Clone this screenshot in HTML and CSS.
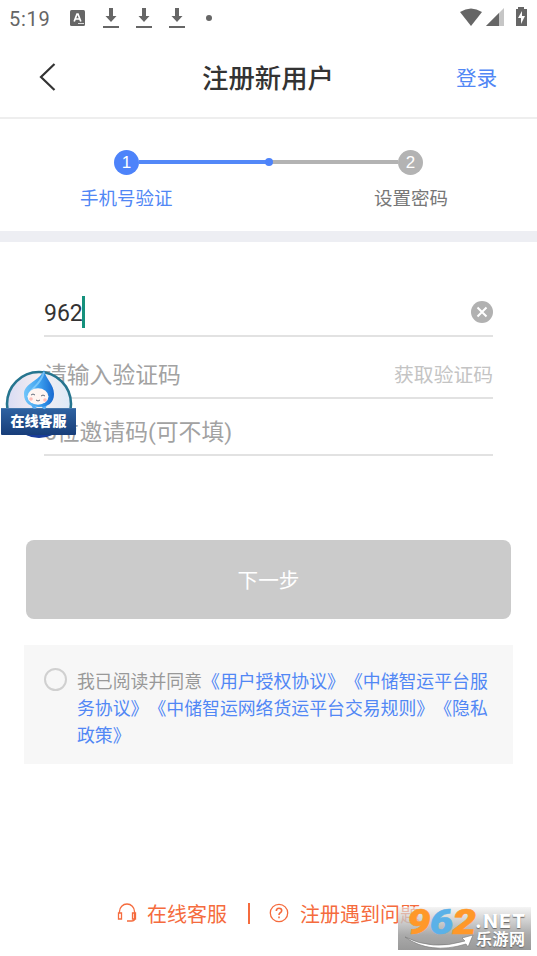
FILE: index.html
```html
<!DOCTYPE html>
<html lang="zh-CN">
<head>
<meta charset="utf-8">
<title>注册新用户</title>
<link rel="stylesheet" href="styles.css">
</head>
<body>
<div class="screen">
  <div class="status">
    <span class="clock">5:19</span>
    <svg class="app-icon" width="15" height="16" viewBox="0 0 15 16"><rect width="15" height="16" rx="1.500" fill="#666"/><path d="M4.2 11.5 7 4h1l2.8 7.5M5.3 9h4.4" fill="none" stroke="#fff" stroke-width="1.7"/><path d="M8 13.5h6" stroke="#ddd"/></svg>
    <svg class="down" width="16" height="22" viewBox="0 0 16 22"><path d="M6 1h4v8h3.5L8 15 2.5 9H6zM0 19h16v2H0z"/></svg>
    <svg class="down" width="16" height="22" viewBox="0 0 16 22"><path d="M6 1h4v8h3.5L8 15 2.5 9H6zM0 19h16v2H0z"/></svg>
    <svg class="down" width="16" height="22" viewBox="0 0 16 22"><path d="M6 1h4v8h3.5L8 15 2.5 9H6zM0 19h16v2H0z"/></svg>
    <span class="dot"></span>
    <svg class="signals" width="68" height="22" viewBox="0 0 68 22"><path d="M0 5Q11-2 22 5L11 19z" fill="#666"/><path d="M44 1v18H26z" fill="#c6c6c6"/><path d="M39 6v13H26z" fill="#666"/><path d="M58 0h6v2h3v17H56V2h2z" fill="#666"/><path d="m62 4-4 7h3v6l4-8h-3z" fill="#fff"/></svg>
  </div>
  <header class="header">
    <svg class="back" width="18" height="30" viewBox="0 0 18 30"><path d="M15.5 2 2 15l13.500 13" fill="none" stroke="#333" stroke-width="2.2"/></svg>
    <h1>注册新用户</h1>
    <a class="login">登录</a>
  </header>
  <section class="steps">
    <div class="track"><span class="num active">1</span><span class="bar done"></span><span class="node"></span><span class="bar"></span><span class="num">2</span></div>
    <div class="labels"><span class="current">手机号验证</span><span>设置密码</span></div>
  </section>
  <main>
    <div class="field phone"><span class="value">962</span><span class="caret"></span>
      <svg class="clear" width="22" height="22" viewBox="0 0 22 22"><circle cx="11" cy="11" r="11" fill="#b1b1b1"/><path d="m6.500 6.500 9 9m0-9-9 9" stroke="#fff" stroke-width="2"/></svg>
    </div>
    <div class="field code"><span>请输入验证码</span><span class="get">获取验证码</span></div>
    <div class="field invite"><span>6位邀请码(可不填)</span></div>
    <div class="next">下一步</div>
    <div class="agreement"><span class="radio"></span><p>我已阅读并同意<a>《用户授权协议》《中储智运平台服务协议》《中储智运网络货运平台交易规则》《隐私政策》</a></p></div>
  </main>
  <footer class="footer">
    <svg width="20" height="20" viewBox="0 0 20 20"><path d="M2.500 10V8.500a7.500 7.500 0 0 1 15 0V16q0 2-3 2H10M1.500 10h3v6h-3zM15.500 10h3v6h-3z" fill="none" stroke="#f56b3d" stroke-width="1.300"/></svg>
    <span class="service">在线客服</span><span class="divider"></span>
    <svg width="20" height="20" viewBox="0 0 20 20"><circle cx="10" cy="10" r="8.700" fill="none" stroke="#f56b3d" stroke-width="1.300"/><path d="M7.300 8Q7.300 5.300 10 5.300T12.700 7.800Q12.700 9 11 10 10 10.700 10 12M10 13.500v1.800" fill="none" stroke="#f56b3d" stroke-width="1.600"/></svg>
    <span class="help">注册遇到问题</span>
  </footer>
  <div class="mascot">
    <svg width="76" height="70" viewBox="0 0 76 70">
      <defs><linearGradient id="drop" x1="0" x2="1"><stop stop-color="#72c5fa"/><stop offset=".5" stop-color="#3ea2f0"/><stop offset="1" stop-color="#1769d0"/></linearGradient><linearGradient id="disc"><stop stop-color="#d9dcf4"/><stop offset=".5" stop-color="#f5eef0"/><stop offset="1" stop-color="#dceaf8"/></linearGradient><linearGradient id="banner" x2="0" y2="1"><stop stop-color="#2f63a2"/><stop offset="1" stop-color="#173d79"/></linearGradient></defs>
      <circle cx="39" cy="35" r="32" fill="url(#disc)" stroke="#26758f" stroke-width="2.600"/>
      <path d="M17 58h45q-9 11-23 11T17 58" fill="#193b9a"/>
      <rect x="1" y="39" width="75" height="27" rx="1" fill="url(#banner)"/><path d="M1 39.500h75" stroke="#4678ad"/>
      <path d="M31 34q1 8 6 5M41 36q4 9 6-1" fill="#57aef5"/>
      <path d="M44 1c2 10 10 14 10 24 0 9-6 13-15 13s-15-4-15-13C24 14 40 12 44 1z" fill="url(#drop)"/>
      <path d="M44 3c-4 15-14 15-16 25" fill="none" stroke="#9bdcff" stroke-width="2" opacity=".6"/>
      <ellipse cx="38" cy="27.500" rx="10.500" ry="8.300" fill="#fff5f2"/>
      <path d="M31 26q2-2 4 0m6 1q2-2 4 0M36 31q2 2 4 0" fill="none" stroke="#39465a" stroke-width=".8"/><circle cx="31" cy="30" r="1.800" fill="#ffbbb7"/><circle cx="45" cy="31" r="1.800" fill="#ffbbb7"/>
    </svg>
    <span>在线客服</span>
  </div>
  <div class="watermark">
    <svg width="133" height="43" viewBox="0 0 133 43"><path d="M7 30q27 14 60 4l-3-3 11-3-5 12-2-3Q32 48 7 30z" fill="#fff" stroke="#777" stroke-width=".6"/></svg>
    <span class="brand"><b>9</b><b class="six">6</b><b>2</b></span><span class="net">.NET</span><span class="site">乐游网</span>
  </div>
</div>
</body>
</html>
```
FILE: styles.css
```css
* { box-sizing: border-box; }
body { margin: 0; background: #fff; font-family: Roboto, "Noto Sans CJK SC", sans-serif; color: #333; text-spacing-trim: space-all; }
svg { display: block; flex: none; }
.screen { position: relative; width: 537px; height: 956px; display: flex; flex-direction: column; overflow: hidden; white-space: nowrap; }
.status { height: 36px; display: flex; align-items: center; padding: 0 10px 0 9px; color: #666; }
.clock { width: 61px; font-size: 20px; letter-spacing: .7px; line-height: 36px; padding-top: 1px; }
.down { margin-left: 17px; fill: #666; }
.app-icon + .down { margin-left: 18px; }
.dot { width: 6px; height: 6px; border-radius: 50%; background: #666; margin-left: 21px; }
.signals { margin-left: auto; margin-right: -1px; }
.header { height: 83px; border-bottom: 2px solid #eee; display: grid; grid-template-columns: 80px 1fr 81px; align-items: center; }
.back { margin-left: 39px; }
h1 { margin: 0; padding-top: 4px; text-align: center; font-size: 26.4px; line-height: 40px; font-weight: 500; }
.login { font-size: 20.6px; color: #5187f5; line-height: 30px; padding-top: 5px; }
.steps { height: 123px; padding-top: 30px; border-bottom: 11px solid #edeef3; }
.track { display: flex; align-items: center; height: 26px; padding: 0 114px; }
.num { width: 25px; height: 25px; border-radius: 50%; background: #b3b3b3; color: #fff; text-align: center; font: 17px/25px "Liberation Sans", sans-serif; }
.num.active { background: #4d83fa; }
.bar { flex: 1; height: 4px; background: #b3b3b3; }
.bar.done { background: #5388f8; }
.node { width: 8px; height: 8px; border-radius: 50%; background: #4d83fa; margin: 0 -4px; position: relative; }
.labels { display: flex; justify-content: space-between; padding: 10px 89px 0 80px; font-size: 18.5px; line-height: 28px; color: #777; }
.current { color: #5187f5; }
.field { margin: 0 44px; border-bottom: 2px solid #e2e2e2; display: flex; align-items: center; font-size: 22.8px; color: #a2a2a2; }
.phone { height: 95px; padding-top: 46px; color: #333; }
.value { font-size: 23px; padding-top: 3px; }
.caret { width: 3px; height: 32px; background: #15917c; margin-left: -1px; }
.clear { margin-left: auto; }
.code { height: 62px; padding-top: 13px; justify-content: space-between; }
.get { font-size: 19.8px; color: #c4c4c4; }
.invite { height: 57px; padding-top: 8px; }
.next { margin: 84px 26px 0; height: 79px; border-radius: 8px; background: #cbcbcb; color: #fff; text-align: center; font-size: 20.6px; line-height: 82px; }
.agreement { margin: 26px 24px 0; height: 119px; background: #f7f7f7; padding: 23px 20px; display: flex; }
.radio { width: 23px; height: 23px; border: 2px solid #d0d0d0; border-radius: 50%; margin-right: 10px; flex: none; }
.agreement p { margin: 0; width: 414px; white-space: normal; font-size: 17.88px; line-height: 27px; color: #999; word-break: break-all; line-break: anywhere; }
.agreement a { color: #5187f5; }
.footer { margin-top: auto; margin-bottom: 25px; height: 36px; padding-left: 117px; display: flex; align-items: center; color: #f56b3d; font-size: 20px; }
.service { margin-left: 10px; width: 80px; }
.divider { width: 2px; height: 21px; background: #f56b3d; margin: 0 20px 0 21px; }
.footer .divider + svg { margin-left: -1px; }
.help { margin-left: 11px; }
.mascot { position: absolute; left: 0; top: 369px; width: 76px; height: 70px; }
.mascot span { position: absolute; left: 1px; top: 39px; width: 75px; text-align: center; font-size: 14px; line-height: 27px; font-weight: 900; color: #fff; }
.watermark { position: absolute; left: 398px; top: 907px; width: 133px; height: 43px; background: linear-gradient(#eeeeee99, #aaa 65%, #999); }
.brand, .net, .site { position: absolute; line-height: 1; }
.brand { left: 9px; top: -2px; font: italic 700 35px/35px Roboto, sans-serif; display: flex; color: #ff9829; -webkit-text-stroke: .5px; transform: scaleX(1.2); transform-origin: left; }
.brand b { width: 19px; }
.brand .six { color: #5bb1e8; }
.net { left: 77px; top: 5px; font: 800 19px/19px Inter, sans-serif; letter-spacing: 1.5px; color: #fff; text-shadow: 0 1px 1px #666; }
.site { left: 78px; top: 25px; font-size: 16px; font-weight: 700; letter-spacing: .5px; color: #fff; text-shadow: 0 1px 1px #666; }
```
